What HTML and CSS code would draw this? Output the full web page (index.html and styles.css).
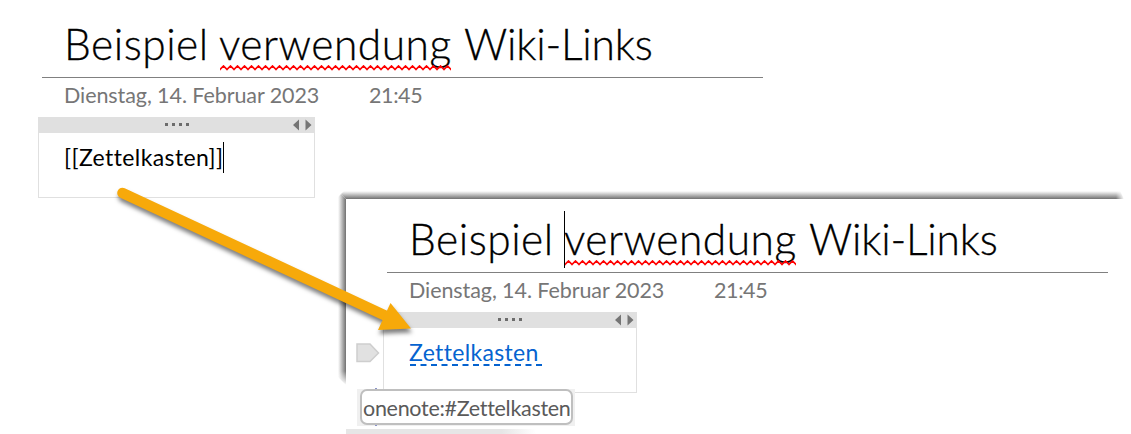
FILE: index.html
```html
<!DOCTYPE html>
<html lang="de">
<head>
<meta charset="utf-8">
<title>Wiki-Links</title>
<link rel="stylesheet" href="styles.css">
</head>
<body>
<main class="canvas">
  <section class="page page-source">
    <h1 class="title"><span class="w1">Beispiel</span><span class="w2">verwendung<svg class="squiggle" width="232" height="6"><defs><pattern id="wave" width="7" height="6" patternUnits="userSpaceOnUse"><path d="M-1 5.5 L0 4.5 L3.5 1 L7 4.5 L8 5.5" fill="none" stroke="#f00" stroke-width="1.7"/></pattern></defs><rect width="231" height="6" fill="url(#wave)"/></svg></span><span class="w3">Wiki-Links</span></h1>
    <div class="meta"><span class="date">Dienstag, 14. Februar 2023</span><span class="time">21:45</span></div>
    <div class="note">
      <div class="grip"><span class="dots"><i></i><i></i><i></i><i></i></span><svg class="arrows" width="20" height="12"><path d="M7 .5v11L1 6zM13.500 .5v11l6-5.500z" fill="#757575"/></svg></div>
      <p class="text"><span class="raw">[[Zettelkasten]]</span><span class="caret"></span></p>
    </div>
  </section>

  <svg class="frame" width="800" height="200">
    <defs>
      <linearGradient id="gt" x1="0" y1="0" x2="0" y2="1"><stop offset="0" stop-color="#fff"/><stop offset=".25" stop-color="#dedede"/><stop offset="1" stop-color="#707070"/></linearGradient>
      <linearGradient id="gl"><stop offset="0" stop-color="#fff"/><stop offset=".25" stop-color="#dedede"/><stop offset="1" stop-color="#707070"/></linearGradient>
      <linearGradient id="fr"><stop offset="0" stop-color="#fff" stop-opacity="0"/><stop offset="1" stop-color="#fff"/></linearGradient>
      <linearGradient id="fb" x1="0" y1="0" x2="0" y2="1"><stop offset="0" stop-color="#fff" stop-opacity="0"/><stop offset="1" stop-color="#fff"/></linearGradient>
    </defs>
    <path d="M0 0H782L786 8H8z" fill="url(#gt)"/>
    <path d="M0 0L8 8V194L0 186z" fill="url(#gl)"/>
    <path d="M0 0H6L0 6z" fill="#fff"/>
    <path d="M778 0h8v8h-8z" fill="url(#fr)"/>
    <path d="M0 180h8v14h-8z" fill="url(#fb)"/>
  </svg>

  <section class="page page-result">
    <h1 class="title"><span class="w1">Beispiel</span><span class="w2">verwendung<svg class="squiggle" width="232" height="6"><rect width="231" height="6" fill="url(#wave)"/></svg><span class="title-caret"></span></span><span class="w3">Wiki-Links</span></h1>
    <div class="meta"><span class="date">Dienstag, 14. Februar 2023</span><span class="time">21:45</span></div>
    <div class="note">
      <div class="grip"><span class="dots"><i></i><i></i><i></i><i></i></span><svg class="arrows" width="20" height="12"><path d="M7 .5v11L1 6zM13.500 .5v11l6-5.500z" fill="#757575"/></svg></div>
      <p class="text"><a class="link">Zettelkasten<svg class="dashes" width="133" height="2"><path d="M0 1H132" stroke="#0563d0" stroke-width="2" stroke-dasharray="6 4.500"/></svg></a></p>
    </div>
    <svg class="tag" width="24" height="20"><path d="M1 1H14L22.500 10L14 18.500H1z" fill="#e1e1e1" stroke="#cecece" stroke-width="1.500"/></svg>
  </section>

  <div class="strip"></div>
  <div class="tip-back"><div class="tip"><span class="tip-text">onenote:#Zettelkasten</span></div></div>

  <svg class="arrow" width="330" height="180" viewBox="100 170 330 180">
    <g fill="#f7a90a" stroke="none">
      <path d="M122.500 193L385 315.500" stroke="#f7a90a" stroke-width="10.500" stroke-linecap="round"/>
      <path d="M390.500 303L411 328.500L378 330z"/>
    </g>
  </svg>
</main>
</body>
</html>
```
FILE: styles.css
```css
* { box-sizing: border-box; }
body { margin: 0; background: #fff; font-family: Lato, "Open Sans", sans-serif; font-variant-ligatures: none; }
.canvas { position: relative; width: 1131px; height: 434px; overflow: hidden; }
.page { position: absolute; width: 725px; }
.page-source { left: 38px; top: 16px; }
.page-result { left: 383px; top: 211px; }
.title {
  display: flex;
  height: 62px;
  margin: 0 0 0 4px;
  padding-left: 22px;
  border-bottom: 1px solid #808080;
  font-weight: 300;
  font-size: 42.500px;
  line-height: 56px;
  color: #000;
  white-space: nowrap;
  -webkit-text-stroke: .3px #000;
}
.w1 { width: 155px; letter-spacing: .5px; }
.w2 { position: relative; width: 245px; letter-spacing: .5px; }
.w3 { letter-spacing: -.2px; }
.squiggle { position: absolute; left: 1px; top: 49px; }
.title-caret { position: absolute; left: 0; top: 0; width: 1px; height: 57px; background: #000; }
.meta {
  display: flex;
  height: 39px;
  padding: 3px 0 0 26px;
  font-size: 21.500px;
  letter-spacing: -.08px;
  line-height: 28px;
  color: #767676;
  white-space: nowrap;
}
.date { width: 305px; }
.time { letter-spacing: -.4px; }
.note { width: 277px; height: 81px; border: 1px solid #e0e0e0; border-top: 0; }
.page-result .note { width: 254px; }
.grip {
  display: grid;
  grid-template-columns: 1fr auto 1fr;
  align-items: center;
  height: 16px;
  margin: 0 -1px;
  background: #e0e0e0;
}
.dots { grid-column: 2; display: flex; gap: 4px; margin-top: -1px; }
.dots i { width: 3px; height: 3px; background: #6c6c6c; }
.arrows { justify-self: end; margin-right: 3px; }
.text {
  display: flex;
  margin: 0;
  padding: 9px 0 0 25px;
  font-size: 23px;
  line-height: 31px;
  color: #000;
  white-space: nowrap;
}
.raw { width: 159px; letter-spacing: .4px; }
.caret { width: 1px; height: 31px; background: #000; }
.link { position: relative; color: #0563d0; letter-spacing: .35px; }
.dashes { position: absolute; left: 1px; top: 27px; }
.tag { position: absolute; left: -27px; top: 132px; }
.frame { position: absolute; left: 338px; top: 191px; }
.strip {
  position: absolute; left: 346px; top: 429px; width: 190px; height: 5px;
  background: linear-gradient(90deg, #e6e6e6 82%, #fff);
}
.tip-back { position: absolute; left: 357px; top: 389px; width: 218px; height: 37px; padding: 0 2px 1px 3px; background: #f0f0f0; }
.tip {
  height: 36px;
  border: 2px solid #bfbfbf;
  border-radius: 7px;
  background: #fff;
  padding-left: 1px;
  font-size: 21.500px;
  letter-spacing: -.3px;
  line-height: 35px;
  color: #5a5a5a;
  white-space: nowrap;
}
.tip-back::before, .tip-back::after { content: ""; position: absolute; left: 18px; width: 2px; height: 1px; background: #8b94c8; }
.tip-back::before { top: -1px; }
.tip-back::after { bottom: 0; }
.arrow { position: absolute; left: 100px; top: 170px; filter: drop-shadow(1px 4px 2px rgba(0, 0, 0, .5)); }
```
